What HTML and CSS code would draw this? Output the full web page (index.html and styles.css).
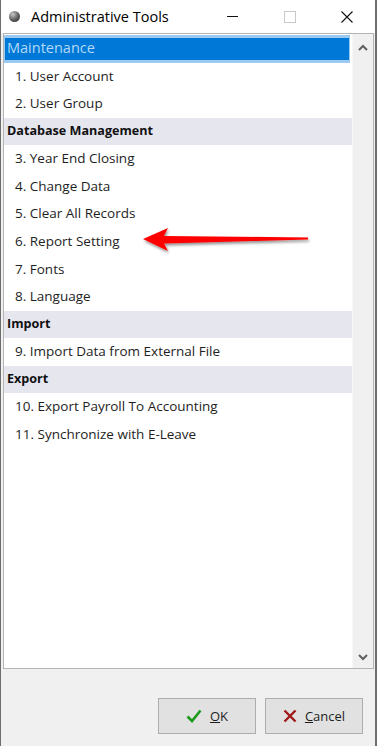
FILE: index.html
```html
<!DOCTYPE html>
<html>

<head>
  <meta charset="UTF-8">
  <meta name="viewport" content="width=device-width, initial-scale=1">
  <title>Administrative Tools</title>
  <link rel="stylesheet" href="styles.css">
</head>

<body>

  <div class="window">

    <div class="titlebar">
      <span class="app-icon"></span>
      <span class="title">Administrative Tools</span>
      <span class="caption-btn minimize"><span class="dash"></span></span>
      <span class="caption-btn maximize"><span class="box"></span></span>
      <span class="caption-btn close">
        <svg width="12" height="12" viewBox="0 0 12 12">
          <path d="M0.5 0.5 L11.5 11.5 M11.5 0.5 L0.5 11.5" stroke="#111" stroke-width="1.1" fill="none" />
        </svg>
      </span>
    </div>

    <div class="client">

      <div class="listbox">
        <ul class="list">
          <li class="row header selected">Maintenance</li>
          <li class="row item">1. User Account</li>
          <li class="row item">2. User Group</li>
          <li class="row header">Database Management</li>
          <li class="row item">3. Year End Closing</li>
          <li class="row item">4. Change Data</li>
          <li class="row item">5. Clear All Records</li>
          <li class="row item">6. Report Setting</li>
          <li class="row item">7. Fonts</li>
          <li class="row item">8. Language</li>
          <li class="row header">Import</li>
          <li class="row item">9. Import Data from External File</li>
          <li class="row header">Export</li>
          <li class="row item">10. Export Payroll To Accounting</li>
          <li class="row item">11. Synchronize with E-Leave</li>
        </ul>

        <div class="scrollbar">
          <svg class="arrow" width="10" height="7" viewBox="0 0 10 7">
            <path d="M1 6 L5 2 L9 6" stroke="#606060" stroke-width="2" fill="none" />
          </svg>
          <svg class="arrow" width="10" height="7" viewBox="0 0 10 7">
            <path d="M1 1 L5 5 L9 1" stroke="#606060" stroke-width="2" fill="none" />
          </svg>
        </div>

        <!-- pointer drawn over the list -->
        <svg class="pointer" width="180" height="40" viewBox="0 0 180 40">
          <defs>
            <filter id="shade" x="-10%" y="-30%" width="120%" height="180%">
              <feDropShadow dx="1" dy="2" stdDeviation="1.6" flood-color="#000" flood-opacity="0.45" />
            </filter>
          </defs>
          <path d="M4 19 L29 8 L25 16 L169 17.5 L169 19.5 L25 23.5 L29 31 Z" fill="#ff0000" filter="url(#shade)" />
        </svg>
      </div>

      <div class="footer">
        <button class="button">
          <svg width="16" height="14" viewBox="0 0 16 14">
            <path d="M1.5 7.5 L6 12 L14.5 1.5" stroke="#1a9a1a" stroke-width="2.6" fill="none" />
          </svg>
          <span><u>O</u>K</span>
        </button>
        <button class="button">
          <svg width="14" height="14" viewBox="0 0 14 14">
            <path d="M1.5 1.5 L12.5 12.5 M12.5 1.5 L1.5 12.5" stroke="#a01818" stroke-width="2.4" fill="none" />
          </svg>
          <span><u>C</u>ancel</span>
        </button>
      </div>

    </div>

  </div>

</body>

</html>
```

FILE: styles.css
```css
body {
  margin: 0;
  background: #f0f0f0;
  font-family: 'Open Sans', 'Noto Sans', sans-serif;
  color: #222;
}

.window {
  width: 377px;
  height: 746px;
  box-sizing: border-box;
  border-left: 1px solid #6d6d6d;
  border-right: 2px solid #6d6d6d;
  display: flex;
  flex-direction: column;
  background: #f0f0f0;
}

/* title bar */

.titlebar {
  height: 33px;
  flex: none;
  display: flex;
  align-items: center;
  background: #fff;
  position: relative;
}

.app-icon {
  width: 11px;
  height: 11px;
  border-radius: 50%;
  margin-left: 8px;
  margin-right: 11px;
  background: radial-gradient(circle at 35% 30%, #c8c8c8, #5a5a5a 55%, #2e2e2e);
}

.title {
  font-family: 'Open Sans', sans-serif;
  font-size: 14.5px;
  color: #000;
  flex: 1;
}

.caption-btn {
  width: 58px;
  height: 33px;
  display: flex;
  align-items: center;
  justify-content: center;
}

.minimize .dash {
  width: 11px;
  height: 1px;
  background: #111;
}

.maximize .box {
  width: 10px;
  height: 10px;
  border: 1px solid #c9c9c9;
}

.close {
  width: 56px;
}

/* client area */

.client {
  flex: 1;
  display: flex;
  flex-direction: column;
  padding: 0 1px 0 2px;
}

.listbox {
  position: relative;
  height: 634px;
  border: 1px solid #b4b4b4;
  background: #fff;
  display: flex;
}

.list {
  list-style: none;
  margin: 0;
  padding: 0;
  flex: 1;
}

.row {
  height: 27.57px;
  line-height: 26px;
  font-size: 13.5px;
  box-sizing: border-box;
}

.item {
  padding-left: 11px;
  color: #1e1e1e;
}

.header {
  padding-left: 3px;
  font-weight: bold;
  font-size: 12.6px;
  background: #e6e6ef;
  color: #111;
}

.selected {
  margin-top: 1px;
  margin-right: 2px;
  font-weight: normal;
  font-size: 14.5px;
  background: #0078d7;
  color: #b3d9f7;
  border-top: 3px solid #9ccaf0;
  border-bottom: 3px solid #9ccaf0;
  border-left: 1px solid #9ccaf0;
  border-right: 1px solid #9ccaf0;
  padding-left: 2px;
  line-height: 20px;
  box-shadow: inset 0 1px 0 #0078d7;
}

.scrollbar {
  width: 20px;
  flex: none;
  background: #f0f0f0;
  border-left: 1px solid #f7f7f7;
  display: flex;
  flex-direction: column;
  justify-content: space-between;
  align-items: center;
  padding: 10px 0 7px 0;
}

.pointer {
  position: absolute;
  left: 135px;
  top: 186px;
}

/* buttons */

.footer {
  flex: 1;
  display: flex;
  justify-content: flex-end;
  align-items: flex-start;
  gap: 9px;
  padding: 29px 11px 0 0;
}

.button {
  width: 98px;
  height: 36px;
  background: #e1e1e1;
  border: 1px solid #adadad;
  box-shadow: inset 0 0 0 1px #e1e1e1;
  font-family: 'Open Sans', sans-serif;
  font-size: 13px;
  color: #1e1e1e;
  display: flex;
  align-items: center;
  justify-content: center;
  gap: 8px;
  padding: 0;
}
```
